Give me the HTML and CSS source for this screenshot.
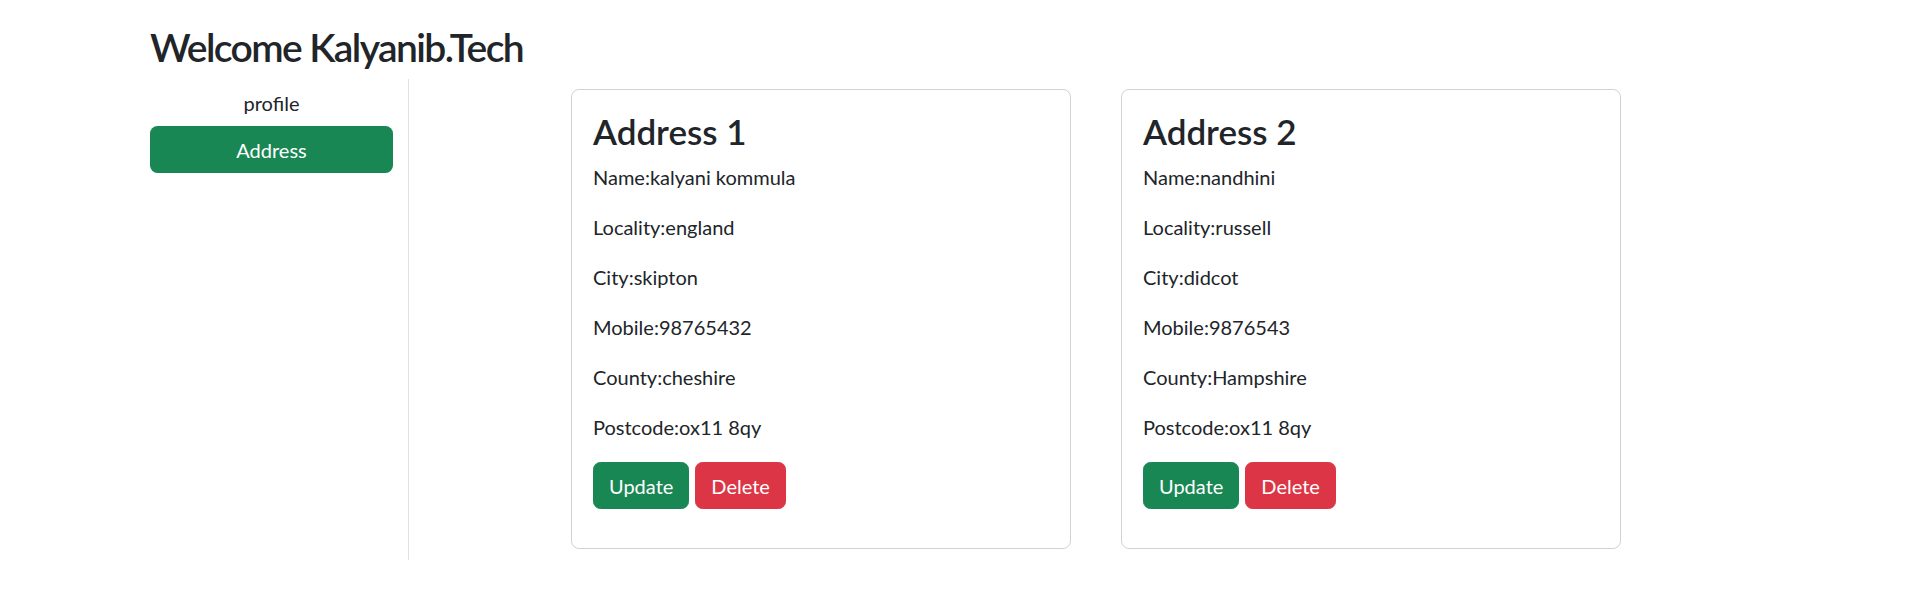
FILE: index.html
```html
<!DOCTYPE html>
<html lang="en">
<head>
<meta charset="utf-8">
<title>Welcome</title>
<link rel="stylesheet" href="styles.css">
</head>
<body>
<div class="page">
  <h2 class="welcome">Welcome Kalyanib.Tech</h2>
  <div class="layout">
    <aside class="sidebar">
      <a class="side-link" href="#">profile</a>
      <a class="side-link active" href="#">Address</a>
    </aside>
    <main class="addresses">
      <div class="card">
        <h3 class="card-title">Address 1</h3>
        <p>Name:kalyani kommula</p>
        <p>Locality:england</p>
        <p>City:skipton</p>
        <p>Mobile:98765432</p>
        <p>County:cheshire</p>
        <p>Postcode:ox11 8qy</p>
        <div class="actions">
          <button class="btn btn-update">Update</button>
          <button class="btn btn-delete">Delete</button>
        </div>
      </div>
      <div class="card">
        <h3 class="card-title">Address 2</h3>
        <p>Name:nandhini</p>
        <p>Locality:russell</p>
        <p>City:didcot</p>
        <p>Mobile:9876543</p>
        <p>County:Hampshire</p>
        <p>Postcode:ox11 8qy</p>
        <div class="actions">
          <button class="btn btn-update">Update</button>
          <button class="btn btn-delete">Delete</button>
        </div>
      </div>
    </main>
  </div>
</div>
</body>
</html>
```
FILE: styles.css
```css
* { box-sizing: border-box; }
body {
  margin: 0;
  font-family: Lato, "Open Sans", sans-serif;
  font-size: 20px;
  line-height: 1.5;
  color: #212529;
  background: #fff;
}
.page { padding: 0 150px; }
.welcome {
  margin: 0 0 8px;
  padding-top: 23px;
  font-size: 39px;
  line-height: 48px;
  font-weight: 600;
  letter-spacing: -1.6px;
}
.layout { display: flex; height: 481px; }
.sidebar {
  width: 259px;
  padding-right: 15px;
  border-right: 1px solid #dee2e6;
  display: flex;
  flex-direction: column;
}
.side-link {
  display: block;
  text-align: center;
  padding: 8.5px 15px;
  line-height: 30px;
  color: #212529;
  text-decoration: none;
  border-radius: 7.5px;
}
.side-link.active { background: #198754; color: #fff; }
.addresses {
  display: flex;
  align-items: flex-start;
  gap: 50px;
  padding: 10px 0 0 162px;
}
.card {
  width: 500px;
  height: 460px;
  border: 1px solid rgba(0, 0, 0, 0.175);
  border-radius: 8px;
  padding: 20px 21px;
}
.card-title {
  margin: 0 0 10px;
  font-size: 35px;
  line-height: 42px;
  font-weight: 600;
}
.card p { margin: 0 0 20px; }
.actions { display: flex; gap: 6px; }
.btn {
  font-family: inherit;
  font-size: 20px;
  line-height: 30px;
  padding: 7.5px 15px;
  border: 1px solid transparent;
  border-radius: 7.5px;
  color: #fff;
  cursor: pointer;
}
.btn-update { background: #198754; border-color: #198754; }
.btn-delete { background: #dc3545; border-color: #dc3545; }
```
